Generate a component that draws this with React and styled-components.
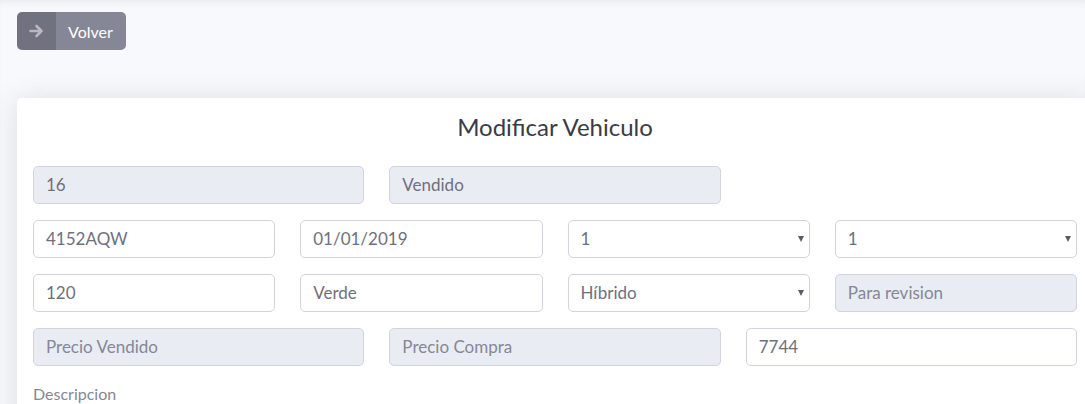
import React from 'react';
import styled, { createGlobalStyle } from 'styled-components';

// --- global ---

const GlobalStyle = createGlobalStyle`
  html, body {
    margin: 0;
    padding: 0;
    background: #f8f9fc;
    overflow: hidden;
  }
  body {
    font-family: Lato, "Noto Sans", sans-serif;
    color: #858796;
    box-shadow: inset 0 6px 10px -6px rgba(58, 59, 69, 0.12);
    min-height: 404px;
  }
  * { box-sizing: border-box; }
`;

// --- layout ---

const Page = styled.div`
  padding: 12px 17px 0;
`;

const BackButton = styled.button`
  display: inline-flex;
  align-items: stretch;
  height: 38px;
  padding: 0;
  border: 0;
  border-radius: 5px;
  overflow: hidden;
  background: #858796;
  color: #fff;
  font-family: inherit;
  font-size: 16px;
  cursor: pointer;
`;

const IconPart = styled.span`
  display: flex;
  align-items: center;
  justify-content: center;
  width: 39px;
  background: rgba(0, 0, 0, 0.15);
`;

const TextPart = styled.span`
  display: flex;
  align-items: center;
  padding: 0 13px 0 12px;
`;

const Card = styled.div`
  width: 1076px;
  margin-top: 48px;
  background: #fff;
  border-radius: 5px;
  box-shadow: 0 2px 28px 0 rgba(58, 59, 69, 0.15);
  padding: 14px 16px 40px;
`;

const Title = styled.h4`
  margin: 0 0 24px;
  text-align: center;
  font-weight: 400;
  font-size: 24px;
  line-height: 30px;
  color: #3a3b45;
`;

const Form = styled.div`
  display: flex;
  flex-direction: column;
  gap: 16px;
`;

const Row = styled.div`
  display: grid;
  grid-template-columns: repeat(${p => p.$cols}, 1fr);
  column-gap: 25px;
`;

const Input = styled.input`
  width: 100%;
  height: 38px;
  padding: 0 12px 2px;
  border: 1px solid #d1d3e2;
  border-radius: 5px;
  background: ${p => (p.disabled ? '#eaecf4' : '#fff')};
  color: #6e707e;
  font-family: inherit;
  font-size: 17px;
  outline: none;
  &::placeholder { color: #858796; }
`;

const SelectWrap = styled.div`
  position: relative;
`;

const Select = styled.select`
  width: 100%;
  height: 38px;
  padding: 0 28px 2px 12px;
  border: 1px solid #d1d3e2;
  border-radius: 5px;
  background: #fff;
  color: #6e707e;
  font-family: inherit;
  font-size: 17px;
  appearance: none;
  outline: none;
`;

const Caret = styled.span`
  position: absolute;
  right: 6px;
  top: 16px;
  width: 0;
  height: 0;
  border-left: 3.5px solid transparent;
  border-right: 3.5px solid transparent;
  border-top: 6px solid #5a5c69;
  pointer-events: none;
`;

const Label = styled.label`
  display: block;
  margin-top: 16px;
  font-size: 16px;
  line-height: 24px;
  color: #858796;
`;

const ArrowIcon = () => (
  <svg width="15" height="14" viewBox="0 0 15 14" aria-hidden="true">
    <path
      d="M1.5 7 H12.5 M7.5 2 L12.5 7 L7.5 12"
      fill="none"
      stroke="rgba(255,255,255,0.5)"
      strokeWidth="2.6"
      strokeLinecap="round"
      strokeLinejoin="round"
    />
  </svg>
);

const SelectField = ({ value, options }) => (
  <SelectWrap>
    <Select defaultValue={value}>
      {options.map(o => <option key={o}>{o}</option>)}
    </Select>
    <Caret />
  </SelectWrap>
);

export default function App() {
  return (
    <Page>
      <GlobalStyle />
      <BackButton>
        <IconPart><ArrowIcon /></IconPart>
        <TextPart>Volver</TextPart>
      </BackButton>

      <Card>
        <Title>Modificar Vehiculo</Title>
        <Form>
          <Row $cols={3}>
            <Input disabled defaultValue="16" />
            <Input disabled defaultValue="Vendido" />
          </Row>
          <Row $cols={4}>
            <Input defaultValue="4152AQW" />
            <Input defaultValue="01/01/2019" />
            <SelectField value="1" options={['1', '2', '3']} />
            <SelectField value="1" options={['1', '2', '3']} />
          </Row>
          <Row $cols={4}>
            <Input defaultValue="120" />
            <Input defaultValue="Verde" />
            <SelectField value="Híbrido" options={['Gasolina', 'Diésel', 'Híbrido', 'Eléctrico']} />
            <Input disabled placeholder="Para revision" />
          </Row>
          <Row $cols={3}>
            <Input disabled placeholder="Precio Vendido" />
            <Input disabled placeholder="Precio Compra" />
            <Input defaultValue="7744" />
          </Row>
        </Form>
        <Label>Descripcion</Label>
      </Card>
    </Page>
  );
}
